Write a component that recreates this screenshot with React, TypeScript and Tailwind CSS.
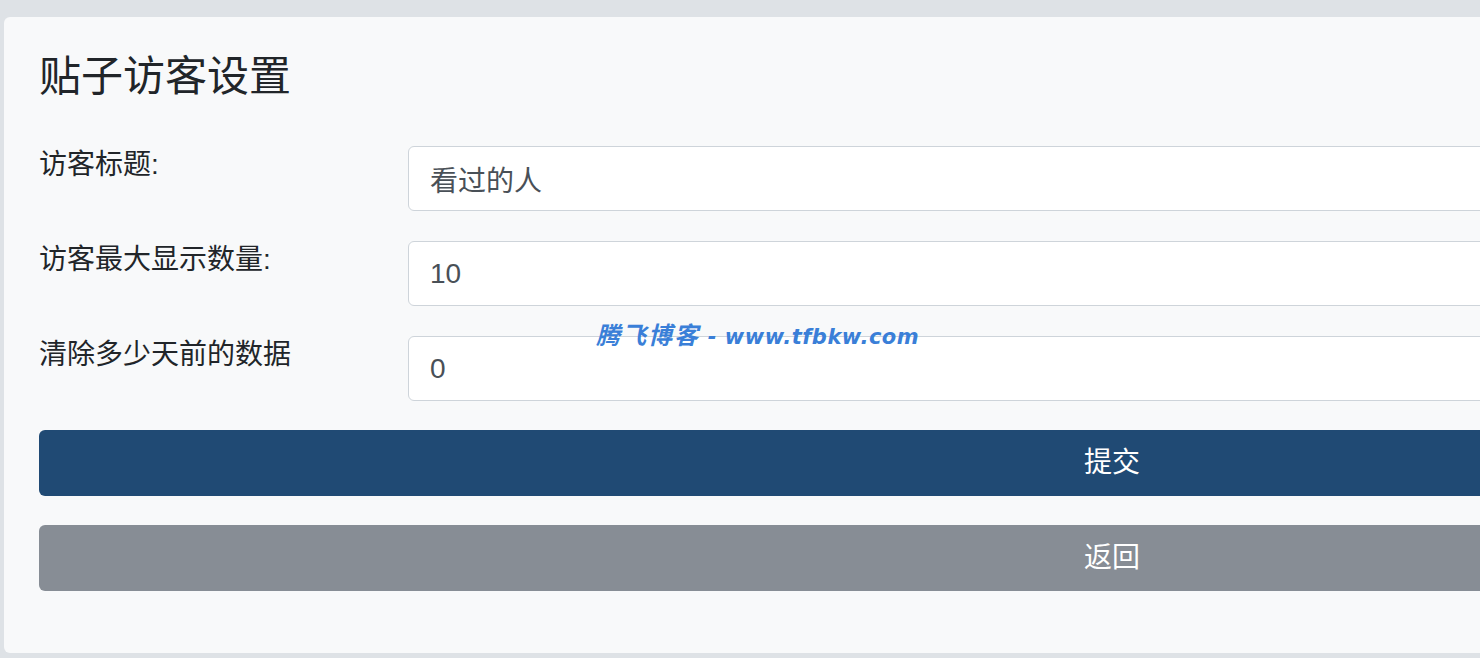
import React from "react"

const font = "font-['Liberation_Sans','Noto_Sans_CJK_SC',sans-serif]"

const fields = [
  { label: "访客标题:", value: "看过的人" },
  { label: "访客最大显示数量:", value: "10" },
  { label: "清除多少天前的数据", value: "0" },
]

export default function App() {
  return (
    <div className={`relative w-[1480px] h-[658px] overflow-hidden bg-[#dee2e6] pt-[17px] pl-[4px] ${font}`}>
      {/* Settings card (wider than the viewport, cut off at the right) */}
      <div className="w-[2216px] h-[636px] rounded-[6px] bg-[#f8f9fa] px-[35px] pt-[35px]">
        <h1 className="text-[42px] leading-[50px] text-[#212529] font-normal">贴子访客设置</h1>

        <form className="mt-[44px] flex flex-col" onSubmit={(e) => e.preventDefault()}>
          {fields.map((field) => (
            <div key={field.label} className="flex mb-[30px]">
              <label className="w-[369px] shrink-0 text-[28px] leading-[38px] text-[#212529]">
                {field.label}
              </label>
              <input
                defaultValue={field.value}
                className="flex-1 h-[65px] rounded-[6px] border border-[#ced4da] bg-white px-[21px] text-[28px] text-[#495057] outline-none"
              />
            </div>
          ))}

          <button
            type="submit"
            className="-mt-[1px] h-[66px] rounded-[6px] bg-[#204a74] text-white text-[28px]"
          >
            提交
          </button>
          <button
            type="button"
            className="mt-[29px] h-[66px] rounded-[6px] bg-[#878d95] text-white text-[28px]"
          >
            返回
          </button>
        </form>
      </div>

      {/* Watermark */}
      <div className="absolute left-[596px] top-[321px] flex items-baseline font-bold italic text-[#3a7fd8] font-['DejaVu_Sans','Noto_Sans_CJK_SC',sans-serif] whitespace-pre leading-[30px]">
        <span className="text-[24px] tracking-[2px]">腾飞博客</span>
        <span className="text-[21px] tracking-[0.5px]"> - www.tfbkw.com</span>
      </div>
    </div>
  )
}
